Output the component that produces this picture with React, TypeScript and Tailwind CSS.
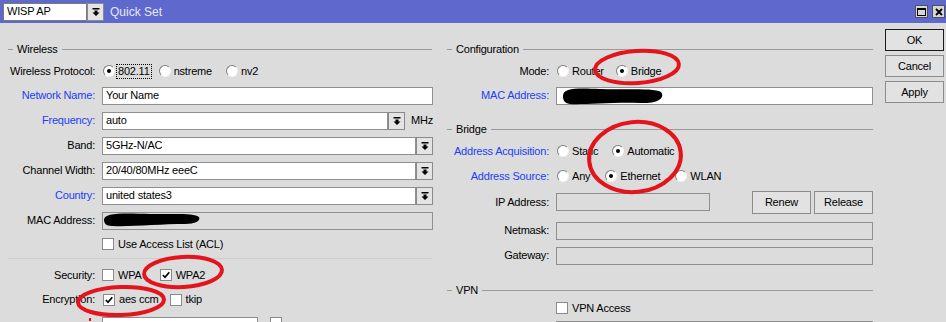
import React from 'react';

const font = { fontFamily: '"Liberation Sans", Arial, sans-serif' };

function Arrow() {
  return (
    <svg width="8" height="8" viewBox="0 0 8 8">
      <rect x="0.5" y="0" width="7" height="1.5" fill="#000" />
      <path d="M2.5 2.5h3v2h2L4 8 0.5 4.5h2z" fill="#000" />
    </svg>
  );
}

function DropBtn() {
  return (
    <div className="w-[17px] h-[18px] shrink-0 border border-[#8a8a8a] bg-[#e4e4e4] flex items-center justify-center">
      <Arrow />
    </div>
  );
}

function Input({ value, disabled, className }: { value?: string; disabled?: boolean; className?: string }) {
  return (
    <div
      className={`h-[18px] border border-[#8f8f8f] px-[3px] flex items-center ${disabled ? 'bg-[#dcdcdc]' : 'bg-white'} ${className ?? 'flex-1'}`}
    >
      {value}
    </div>
  );
}

function Radio({ checked, label, focus }: { checked?: boolean; label: string; focus?: boolean }) {
  return (
    <div className="flex items-center">
      <span className="w-[12px] h-[12px] rounded-full bg-white border border-[#808080] border-b-[#f4f4f4] border-r-[#f4f4f4] flex items-center justify-center shrink-0">
        {checked && <span className="w-[4px] h-[4px] rounded-full bg-black" />}
      </span>
      <span className={`ml-[2px] px-[1px] leading-[13px] ${focus ? 'outline outline-1 outline-dotted outline-black' : ''}`}>
        {label}
      </span>
    </div>
  );
}

function Check({ checked, label }: { checked?: boolean; label?: string }) {
  return (
    <div className="flex items-center">
      <span className="w-[12px] h-[12px] bg-white border border-[#8a8a8a] flex items-center justify-center shrink-0">
        {checked && (
          <svg width="8" height="8" viewBox="0 0 8 8">
            <path d="M0.8 4 L3 6.3 L7.3 1.2" stroke="#000" strokeWidth="1.7" fill="none" />
          </svg>
        )}
      </span>
      {label && <span className="ml-[4px]">{label}</span>}
    </div>
  );
}

function Header({ title, indent }: { title: string; indent: string }) {
  return (
    <div className={`flex items-center h-[14px] ${indent}`}>
      <span className="w-[5px] h-px bg-[#9a9a9a]" />
      <span className="px-[4px]">{title}</span>
      <span className="flex-1 h-px bg-[#9a9a9a]" />
    </div>
  );
}

function Row({
  label,
  blue,
  cols,
  h,
  children,
}: {
  label?: string;
  blue?: boolean;
  cols: string;
  h: string;
  children: React.ReactNode;
}) {
  return (
    <div className={`grid ${cols} gap-x-[7px] items-center ${h}`}>
      <div className={`text-right whitespace-nowrap ${blue ? 'text-[#2040f4]' : 'text-black'}`}>{label}</div>
      <div className="flex items-center min-w-0">{children}</div>
    </div>
  );
}

function Btn({ label, def, className }: { label: string; def?: boolean; className?: string }) {
  return (
    <div
      className={`h-[22px] flex items-center justify-center bg-[#e2e2e2] border ${def ? 'border-[#1a1a1a]' : 'border-[#8c8c8c]'} ${className ?? ''}`}
    >
      {label}
    </div>
  );
}

const L = 'grid-cols-[95px_1fr]';
const R = 'grid-cols-[109px_1fr]';

export default function App() {
  return (
    <div
      className="relative w-[946px] h-[322px] overflow-hidden bg-[#dcdcdc] text-[11px] tracking-[-0.2px] text-black"
      style={font}
    >
      {/* title bar */}
      <div className="h-[23px] bg-[#5f68cc] flex items-center">
        <div className="ml-[3px] w-[84px] h-[18px] bg-white border border-[#7a7a7a] flex items-center px-[3px]">WISP AP</div>
        <DropBtn />
        <span className="ml-[6px] text-[#e6e8ff] text-[12px] tracking-normal">Quick Set</span>
        <div className="ml-auto mr-[1px] flex gap-[4px] items-center">
          <div className="w-[13px] h-[13px] bg-[#d6d6d6] border border-[#505050] flex items-center justify-center">
            <span className="w-[9px] h-[8px] border border-black border-t-2" />
          </div>
          <div className="w-[13px] h-[13px] bg-[#d6d6d6] border border-[#505050] flex items-center justify-center">
            <svg width="8" height="8" viewBox="0 0 8 8">
              <path d="M1 1L7 7M7 1L1 7" stroke="#000" strokeWidth="1.8" />
            </svg>
          </div>
        </div>
      </div>

      <div className="flex h-[299px] overflow-hidden">
        {/* Wireless */}
        <div className="w-[433px] shrink-0 pt-[19px]">
          <Header title="Wireless" indent="ml-[8px] mr-[1px]" />
          <div className="mt-[3px]">
            <Row label="Wireless Protocol:" cols={L} h="h-[24px]">
              <div className="flex items-center gap-[8px] ml-[1px]">
                <Radio checked focus label="802.11" />
                <div className="mr-[5px]">
                  <Radio label="nstreme" />
                </div>
                <Radio label="nv2" />
              </div>
            </Row>
          </div>
          <Row label="Network Name:" blue cols={L} h="h-[25px]">
            <Input value="Your Name" />
          </Row>
          <Row label="Frequency:" blue cols={L} h="h-[25px]">
            <Input value="auto" />
            <DropBtn />
            <span className="ml-[6px] w-[22px]">MHz</span>
          </Row>
          <Row label="Band:" cols={L} h="h-[25px]">
            <Input value="5GHz-N/AC" />
            <DropBtn />
          </Row>
          <Row label="Channel Width:" cols={L} h="h-[25px]">
            <Input value="20/40/80MHz eeeC" />
            <DropBtn />
          </Row>
          <Row label="Country:" blue cols={L} h="h-[25px]">
            <Input value="united states3" />
            <DropBtn />
          </Row>
          <Row label="MAC Address:" cols={L} h="h-[25px]">
            <Input disabled />
          </Row>
          <div className="mt-[3px]">
            <Row cols={L} h="h-[13px]">
              <Check label="Use Access List (ACL)" />
            </Row>
          </div>
          <div className="mt-[9px] ml-[8px] mr-[1px] h-px bg-[#cdcdcd]" />
          <div className="mt-[4px]">
            <Row label="Security:" cols={L} h="h-[24px]">
              <div className="flex items-center gap-[18px]">
                <Check label="WPA" />
                <Check checked label="WPA2" />
              </div>
            </Row>
          </div>
          <Row label="Encryption:" cols={L} h="h-[25px]">
            <div className="flex items-center gap-[11px] ml-[1px]">
              <Check checked label="aes ccm" />
              <Check label="tkip" />
            </div>
          </Row>
          <div className="mt-[5px] grid grid-cols-[95px_1fr] gap-x-[7px]">
            <div className="flex justify-end pr-[4px] pt-[1px]">
              <span className="w-[2px] h-[3px] bg-[#e01010]" />
            </div>
            <div className="flex items-start">
              <Input className="w-[156px]" />
              <div className="ml-[12px]">
                <Check />
              </div>
            </div>
          </div>
        </div>

        {/* Configuration / Bridge / VPN */}
        <div className="w-[433px] shrink-0 ml-[7px] pt-[19px]">
          <Header title="Configuration" indent="ml-[7px]" />
          <div className="mt-[3px]">
            <Row label="Mode:" cols={R} h="h-[24px]">
              <div className="flex items-center gap-[11px] ml-[1px]">
                <Radio label="Router" />
                <Radio checked label="Bridge" />
              </div>
            </Row>
          </div>
          <Row label="MAC Address:" blue cols={R} h="h-[25px]">
            <Input />
          </Row>
          <div className="mt-[14px]">
            <Header title="Bridge" indent="ml-[7px]" />
          </div>
          <div className="mt-[3px]">
            <Row label="Address Acquisition:" blue cols={R} h="h-[24px]">
              <div className="flex items-center gap-[13px] ml-[1px]">
                <Radio label="Static" />
                <Radio checked label="Automatic" />
              </div>
            </Row>
          </div>
          <div className="mt-px">
            <Row label="Address Source:" blue cols={R} h="h-[24px]">
              <div className="flex items-center gap-[14px] ml-[1px]">
                <Radio label="Any" />
                <Radio checked label="Ethernet" />
                <Radio label="WLAN" />
              </div>
            </Row>
          </div>
          <Row label="IP Address:" cols={R} h="h-[28px]">
            <Input disabled className="w-[154px]" />
            <Btn label="Renew" className="ml-auto w-[59px] h-[23px]" />
            <Btn label="Release" className="ml-[3px] w-[59px] h-[23px]" />
          </Row>
          <div className="mt-[2px]">
            <Row label="Netmask:" cols={R} h="h-[25px]">
              <Input disabled />
            </Row>
          </div>
          <Row label="Gateway:" cols={R} h="h-[25px]">
            <Input disabled />
          </Row>
          <div className="mt-[15px]">
            <Header title="VPN" indent="ml-[7px]" />
          </div>
          <div className="mt-[3px]">
            <Row cols={R} h="h-[16px]">
              <Check label="VPN Access" />
            </Row>
          </div>
          <div className="mt-[5px] grid grid-cols-[109px_1fr] gap-x-[7px]">
            <div />
            <Input />
          </div>
        </div>

        {/* buttons */}
        <div className="ml-[12px] w-[59px] pt-[6px] flex flex-col gap-[4px]">
          <Btn label="OK" def />
          <Btn label="Cancel" />
          <Btn label="Apply" />
        </div>
      </div>

      {/* redactions and red annotations drawn over the screenshot */}
      <svg className="absolute inset-0 pointer-events-none" width="946" height="322" viewBox="0 0 946 322">
        <path
          d="M563 96 C563 88 576 88 600 89 C630 90 654 88 661 92 C665 97 660 104 640 103 C612 102 582 105 570 104 C564 103 563 100 563 96Z"
          fill="#000"
        />
        <path
          d="M104 220 C104 213 120 213 150 214 C176 214 195 213 199 217 C201 221 195 224 185 224 C160 224 130 227 112 226 C106 226 104 223 104 220Z"
          fill="#000"
        />
        <g fill="none" stroke="#e3141b" strokeWidth="4">
          <ellipse cx="637" cy="67" rx="42" ry="16" transform="rotate(-4 637 67)" />
          <ellipse cx="635" cy="157" rx="46" ry="35" transform="rotate(-6 635 157)" />
          <ellipse cx="183" cy="272" rx="39" ry="15" transform="rotate(-3 183 272)" />
          <ellipse cx="121" cy="301" rx="43" ry="14" transform="rotate(-2 121 301)" />
        </g>
      </svg>
    </div>
  );
}
